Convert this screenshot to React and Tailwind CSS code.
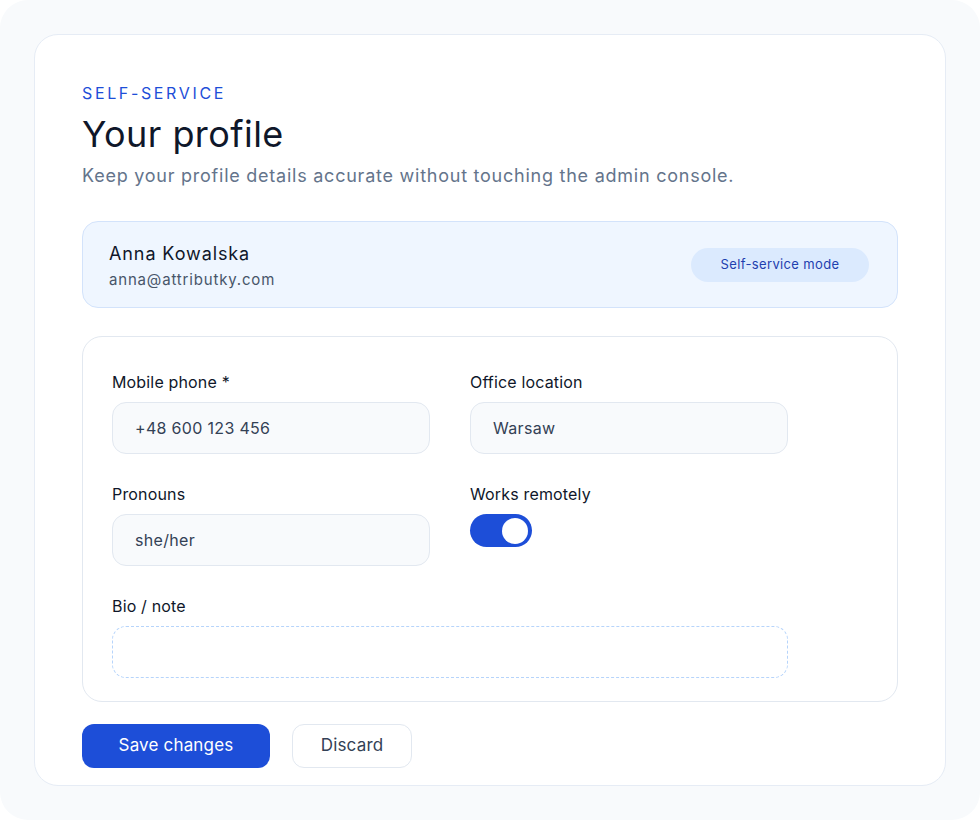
import React, { useState } from 'react';

const Field = ({ label, value }) => (
  <div className="flex flex-col gap-2">
    <label className="text-[16px] leading-6 tracking-[0.01em] text-[#0f172a]">{label}</label>
    <div className="flex h-[52px] items-center rounded-[14px] border border-[#e2e8f0] bg-[#f8fafc] px-[22px] text-[16px] tracking-[0.02em] text-[#334155]">
      {value}
    </div>
  </div>
);

const ProfileForm = () => {
  const [remote, setRemote] = useState(true);

  return (
    <div className="h-[820px] w-[980px] bg-white" style={{ fontFamily: 'Inter, "Noto Sans", sans-serif' }}>
      <div className="flex h-full w-full rounded-[28px] bg-[#f8fafc] p-[34px]">
        <div className="flex flex-1 flex-col rounded-[24px] border border-[#e6ecf5] bg-white px-[47px] pt-[46px]">
          <p className="text-[16px] leading-6 tracking-[0.165em] text-[#1d4ed8]">SELF-SERVICE</p>
          <h1 className="mt-[7px] text-[36px] leading-[44px] tracking-[0.012em] text-[#0f172a]">Your profile</h1>
          <p className="mt-[6px] text-[18px] leading-7 tracking-[0.042em] text-[#64748b]">
            Keep your profile details accurate without touching the admin console.
          </p>

          <div className="mt-[31px] flex h-[87px] items-center justify-between rounded-[16px] border border-[#d3e3fb] bg-[#eff6ff] pl-[26px] pr-[28px]">
            <div className="flex flex-col">
              <span className="text-[18px] leading-7 tracking-[0.05em] text-[#0f172a]">Anna Kowalska</span>
              <span className="mt-[2px] text-[15px] leading-5 tracking-[0.055em] text-[#475569]">anna@attributky.com</span>
            </div>
            <span className="flex h-[34px] w-[178px] items-center justify-center rounded-full bg-[#dbeafe] text-[13px] tracking-[0.027em] text-[#1e40af]">
              Self-service mode
            </span>
          </div>

          <div className="mt-[28px] rounded-[20px] border border-[#e2e8f0] px-[29px] pb-[23px] pt-[33px]">
            <div className="grid grid-cols-[318px_318px] gap-x-[40px] gap-y-[28px]">
              <Field label="Mobile phone *" value="+48 600 123 456" />
              <Field label="Office location" value="Warsaw" />
              <Field label="Pronouns" value="she/her" />
              <div className="flex flex-col gap-2">
                <label className="text-[16px] leading-6 tracking-[0.01em] text-[#0f172a]">Works remotely</label>
                <button
                  onClick={() => setRemote(!remote)}
                  className={`flex h-[33px] w-[62px] items-center rounded-full px-[4px] ${remote ? 'justify-end bg-[#1d4ed8]' : 'justify-start bg-[#cbd5e1]'}`}
                >
                  <span className="h-[26px] w-[26px] rounded-full bg-white" />
                </button>
              </div>
              <div className="col-span-2 flex flex-col gap-2">
                <label className="text-[16px] leading-6 tracking-[0.01em] text-[#0f172a]">Bio / note</label>
                <div className="h-[52px] rounded-[14px] border-[1.5px] border-dashed border-[#b6d4fb]" />
              </div>
            </div>
          </div>

          <div className="mt-[22px] flex gap-[22px]">
            <button className="h-[44px] w-[188px] rounded-[12px] bg-[#1d4ed8] text-[17px] tracking-[0.01em] text-white">Save changes</button>
            <button className="h-[44px] w-[120px] rounded-[12px] border border-[#e2e8f0] bg-white text-[17px] tracking-[0.01em] text-[#334155]">Discard</button>
          </div>
        </div>
      </div>
    </div>
  );
};

export default ProfileForm;
